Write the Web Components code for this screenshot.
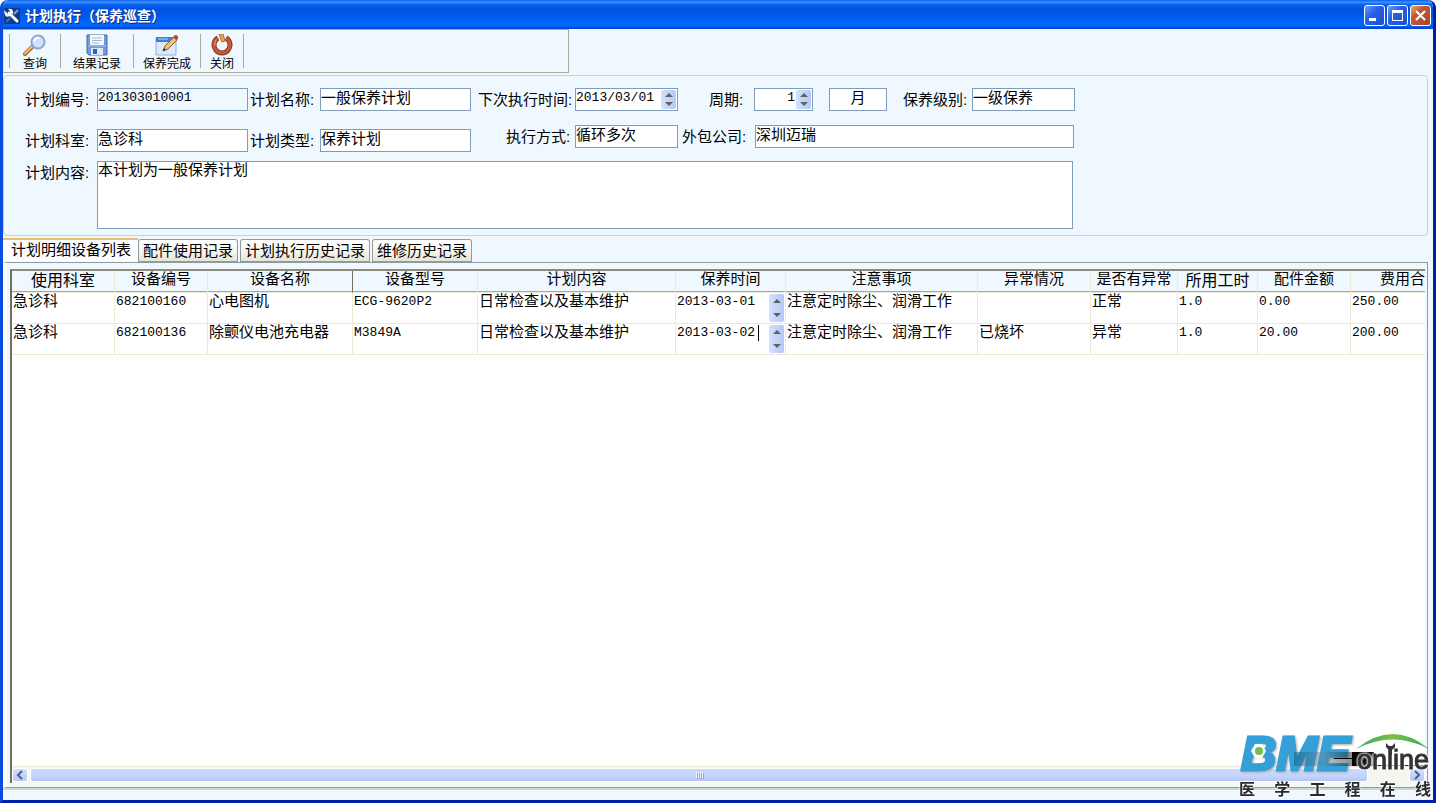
<!DOCTYPE html>
<html lang="zh-CN">
<head>
<meta charset="utf-8">
<title>计划执行（保养巡查）</title>
<style>
    html, body { height: 100%; margin: 0; }
    body {
        background: #fff;
        color: #000;
        overflow: hidden;
        font: 15px/17px "Liberation Sans", "Noto Sans CJK SC", sans-serif;
    }
</style>
</head>
<body>

<xp-window caption="计划执行（保养巡查）">
    <xp-toolbar slot="toolbar">
        <xp-tool icon="search" style="--w:51px">查询</xp-tool>
        <xp-tool icon="save" style="--w:73px">结果记录</xp-tool>
        <xp-tool icon="edit" style="--w:67px">保养完成</xp-tool>
        <xp-tool icon="power" style="--w:43px">关闭</xp-tool>
    </xp-toolbar>
    <plan-form></plan-form>
    <xp-tabs tabs="计划明细设备列表,配件使用记录,计划执行历史记录,维修历史记录">
        <device-grid></device-grid>
    </xp-tabs>
</xp-window>
<bme-logo></bme-logo>

<script>
const ICONS = {
    search: `<svg width="24" height="22" viewBox="0 0 24 22"><path d="M2 20l8-8" stroke="#a8642c" stroke-width="4" stroke-linecap="round"/><path d="M2 19.500l7-7" stroke="#f2c27c" stroke-width="2" stroke-linecap="round"/><circle cx="15" cy="8" r="6.500" fill="#cfe2fc" stroke="#8ea4d8" stroke-width="2"/><path d="M11 8a4 4 0 0 1 5-4" stroke="#fff" stroke-width="2" fill="none"/></svg>`,
    save: `<svg width="22" height="22" viewBox="0 0 22 22"><path d="M1 1h20v20H3l-2-2z" fill="#6d9bdd" stroke="#46689f"/><path d="M4 1h14v10H4z" fill="#f4f7fd"/><path d="M6 4h10M6 6.500h10M6 9h7" stroke="#a9b8d2"/><path d="M5 14h12v7H5z" fill="#dce6f6"/><path d="M7 15h4v5H7z" fill="#2a65bd"/><path d="M2 12h18" stroke="#a9c7f2"/></svg>`,
    edit: `<svg width="24" height="22" viewBox="0 0 24 22"><path d="M1 4h20v17H1z" fill="#dbe8fc" stroke="#8caee4"/><path d="M1 3h20v5H1z" fill="#3f7ddd"/><path d="M3 5h10" stroke="#b9d3ff"/><path d="M8 17l2-5L19 3l3 3-9 9z" fill="#eac27e" stroke="#8a6034"/><path d="M18 3l2-2q4 0 3 4l-2 1z" fill="#bd4728"/><path d="M8 17l1-3 2 2z" fill="#302820"/></svg>`,
    power: `<svg width="22" height="22" viewBox="0 0 22 22"><path d="M7 4a8 8 0 1 0 8 0" fill="none" stroke="#8d3420" stroke-width="5"/><path d="M7 4a8 8 0 1 0 8 0" fill="none" stroke="#c35a3b" stroke-width="3"/><path d="M5 6a7 7 0 0 0-1 5" fill="none" stroke="#eda17d" stroke-width="1"/><path d="M8 0h4l2 7-3 1z" fill="#e3ad58" stroke="#a8682e"/></svg>`,
    up: `<svg width="8" height="4" viewBox="0 0 8 4"><path d="M0 4l4-4 4 4z" fill="#62625e"/></svg>`,
    down: `<svg width="8" height="4" viewBox="0 0 8 4"><path d="M0 0l4 4 4-4z" fill="#62625e"/></svg>`
};

// Attach an open root and fill it with the given styles and markup
function render(el, css, html) {
    const root = el.shadowRoot || el.attachShadow({mode: 'open'});
    root.innerHTML = '<style>* { box-sizing: border-box; }' + css + '</style>' + html;
    return root;
}

class XpWindow extends HTMLElement {
    connectedCallback() {
        render(this, `
            :host {
                display: flex; flex-direction: column; height: 100vh; overflow: hidden;
                box-sizing: border-box; border-radius: 8px 8px 0 0; background: #f0f8ff;
                border: solid #0a4be0; border-width: 0 3px 3px; border-bottom-color: #0020a8; border-right-color: #001ea0;
            }
            header {
                flex: none; height: 29px; margin: 0 -3px; padding: 2px 5px 0 4px;
                display: flex; align-items: center; gap: 2px;
                background: linear-gradient(#0a5be8 0, #3d95ff 7%, #0a62f0 16%, #0053e0 30%, #0058ea 55%, #0067ff 80%, #0062f8 90%, #003fc4 100%);
            }
            h1 { margin: 0 auto 0 3px; font-size: 14px; line-height: 20px; color: #fff; text-shadow: 1px 1px #0a2a80; }
            button { width: 21px; height: 21px; padding: 0; border: 1px solid #fff; border-radius: 3px; background: linear-gradient(135deg, #6f9bf4, #2860e4 40%, #1c50d0); }
            button.close { background: linear-gradient(135deg, #e8b070, #c05a38 35%, #a84428); }
            button svg { display: block; }
            main { flex: 1; min-height: 0; padding-right: 5px; display: flex; flex-direction: column; }
        `, `
            <header>
                <svg width="16" height="16" viewBox="0 0 16 16"><path d="M0 0h16v16H0z" fill="#123a86"/><path d="M5 5l8 8" stroke="#fff" stroke-width="3" stroke-linecap="round"/><path d="M1 3l3 3 2-3-2-2q4-1 5 2t-3 5-5-1-1-5z" fill="#f2f3f6"/><path d="M10 6l4-4" stroke="#7ea2e0" stroke-width="2"/><path d="M2 14l4-4" stroke="#3f6cc0" stroke-width="2"/></svg>
                <h1>${this.getAttribute('caption')}</h1>
                <button aria-label="最小化"><svg width="19" height="19"><path d="M4 12h7v3H4z" fill="#fff"/></svg></button>
                <button aria-label="最大化"><svg width="19" height="19"><path d="M4 4h11v11H4zM5 7v7h9V7z" fill="#fff" fill-rule="evenodd"/></svg></button>
                <button class="close" aria-label="关闭窗口"><svg width="19" height="19"><path d="M5 5l9 9M14 5l-9 9" stroke="#fff" stroke-width="2"/></svg></button>
            </header>
            <slot name="toolbar"></slot>
            <main><slot></slot></main>
        `);
    }
}

class XpToolbar extends HTMLElement {
    connectedCallback() {
        render(this, `
            :host { display: flex; flex: none; align-self: flex-start; width: 566px; height: 44px; margin-bottom: 2px; padding: 4px 0 4px 5px; box-sizing: border-box; border: 1px solid #aca899; border-left-color: #e4e4dc; }
            :host::before { content: ""; width: 1px; background: #aca899; }
        `, '<slot></slot>');
    }
}

class XpTool extends HTMLElement {
    connectedCallback() {
        render(this, `
            :host { display: block; width: var(--w); border-right: 1px solid #aca899; box-sizing: border-box; }
            button { width: 100%; height: 100%; padding: 0; border: 0; background: none; font: 12px/13px "Noto Sans CJK SC", sans-serif; color: #000; display: flex; flex-direction: column; align-items: center; white-space: nowrap; }
            svg { flex: none; }
        `, `<button>${ICONS[this.getAttribute('icon')]}<span><slot></slot></span></button>`);
    }
}

class XpSpinner extends HTMLElement {
    connectedCallback() {
        render(this, `
            :host { display: flex; flex-direction: column; flex: none; width: 15px; border-radius: 2px; background: linear-gradient(90deg, #d4e0fd, #b4c8f8); overflow: hidden; }
            button { flex: 1; padding: 0; border: 0; background: none; display: flex; align-items: center; justify-content: center; }
        `, `<button aria-label="增加">${ICONS.up}</button><button aria-label="减少">${ICONS.down}</button>`);
    }
}

class XpField extends HTMLElement {
    connectedCallback() {
        const label = this.getAttribute('label');
        const value = this.getAttribute('value');
        const readonly = this.hasAttribute('readonly') ? 'readonly' : '';
        const area = this.hasAttribute('multiline');
        const mono = /^[\x20-\x7e]+$/.test(value) ? 'mono' : '';
        render(this, `
            :host { display: flex; flex: none; }
            label { flex: none; width: var(--label, 0); line-height: 23px; white-space: nowrap; }
            .box { display: flex; width: var(--box); height: 23px; background: #fff; border: 1px solid #7f9db9; }
            .box.readonly { background: #f0f8ff; }
            .box.area { height: 68px; }
            input, textarea {
                flex: 1; min-width: 0; margin: 0; padding: 0 0 4px; border: 0; outline: 0; resize: none;
                background: none; color: #000; font: inherit; text-align: var(--align, left);
            }
            textarea { line-height: 15px; }
            input.mono { padding-top: 1px; font: 13px/16px "Liberation Mono", monospace; }
            xp-spinner { margin: 1px; }
        `, `
            ${label ? `<label for="f">${label}</label>` : ''}
            <div class="box ${readonly} ${area ? 'area' : ''}">
                ${area ? `<textarea id="f">${value}</textarea>` : `<input id="f" class="${mono}" value="${value}" ${readonly} ${label ? '' : 'aria-label="周期单位"'}>`}
                ${this.hasAttribute('spinner') ? '<xp-spinner></xp-spinner>' : ''}
            </div>
        `);
    }
}

class PlanForm extends HTMLElement {
    connectedCallback() {
        render(this, `
            :host { display: flex; flex-direction: column; flex: none; gap: 9px; padding: 12px 0 6px 21px; border: 1px solid #d0d0bf; border-radius: 4px; }
            .top { display: flex; gap: 7px; }
            .ids { display: grid; grid-template-columns: auto auto; gap: 18px 2px; }
            .ids xp-field { --label: 72px; --box: 151px; }
            .ids xp-field:nth-child(even) { --label: 70px; }
            .run { display: flex; flex-direction: column; gap: 14px; }
            .line { display: flex; }
            .line xp-field { --label: 69px; --box: 103px; }
            .when { gap: 16px; }
            .who { gap: 4px; padding-left: 28px; }
        `, `
            <div class="top">
                <div class="ids">
                    <xp-field label="计划编号:" value="201303010001" readonly></xp-field>
                    <xp-field label="计划名称:" value="一般保养计划"></xp-field>
                    <xp-field label="计划科室:" value="急诊科"></xp-field>
                    <xp-field label="计划类型:" value="保养计划"></xp-field>
                </div>
                <div class="run">
                    <div class="line when">
                        <xp-field label="下次执行时间:" value="2013/03/01" spinner style="--label:97px"></xp-field>
                        <xp-field label="周期:" value="1" spinner style="--label:45px;--box:59px;--align:right;padding-left:15px"></xp-field>
                        <xp-field value="月" style="--box:58px;--align:center"></xp-field>
                        <xp-field label="保养级别:" value="一级保养"></xp-field>
                    </div>
                    <div class="line who">
                        <xp-field label="执行方式:" value="循环多次"></xp-field>
                        <xp-field label="外包公司:" value="深圳迈瑞" style="--label:73px;--box:319px"></xp-field>
                    </div>
                </div>
            </div>
            <xp-field label="计划内容:" value="本计划为一般保养计划" multiline style="--label:72px;--box:976px"></xp-field>
        `);
    }
}

class XpTabs extends HTMLElement {
    connectedCallback() {
        const tabs = this.getAttribute('tabs').split(',').map((t, i) =>
            `<button role="tab" aria-selected="${i === 0}">${t}</button>`).join('');
        render(this, `
            :host { display: flex; flex-direction: column; flex: 1; min-height: 0; padding: 2px 0 12px; box-sizing: border-box; }
            nav { display: flex; flex: none; align-items: flex-end; gap: 2px; height: 24px; }
            button {
                height: 23px; padding: 0 4px; font: inherit; color: #000; white-space: nowrap;
                border: 1px solid #919b9c; border-top-color: #7f9db9; border-radius: 3px 3px 0 0;
                background: linear-gradient(#fff, #f4f3ec 60%, #e6e4d8);
            }
            button[aria-selected=true] {
                height: 24px; margin-right: -2px; padding: 0 7px 4px 8px; background: #fcfcfe;
                border: 0; border-top: 2px solid #e5bf70; border-radius: 0;
            }
            section {
                flex: 1; min-height: 0; display: flex; padding: 6px 2px 4px 3px;
                border: 1px solid #919b9c; border-left: 4px solid #fbfcfe;
                box-shadow: 0 2px #d9d5c3;
            }
        `, `<nav role="tablist">${tabs}</nav><section role="tabpanel"><slot></slot></section>`);
    }
}

class DeviceGrid extends HTMLElement {
    get columns() {
        return [
            ['使用科室', 103, 'big'], ['设备编号', 93], ['设备名称', 145, 'mark'], ['设备型号', 125],
            ['计划内容', 198], ['保养时间', 110], ['注意事项', 192], ['异常情况', 113],
            ['是否有异常', 87], ['所用工时', 80, 'big'], ['配件金额', 93], ['费用合计', 119]
        ];
    }
    get rows() {
        return [
            ['急诊科', '682100160', '心电图机', 'ECG-9620P2', '日常检查以及基本维护', '2013-03-01', '注意定时除尘、润滑工作', '', '正常', '1.0', '0.00', '250.00'],
            ['急诊科', '682100136', '除颤仪电池充电器', 'M3849A', '日常检查以及基本维护', '2013-03-02', '注意定时除尘、润滑工作', '已烧坏', '异常', '1.0', '20.00', '200.00']
        ];
    }

    cell(text, col, row) {
        if (col === 5) {
            return `<td><div class="date"><input class="mono" aria-label="保养时间" value="${text}">${row === 1 ? '<i></i>' : ''}<xp-spinner></xp-spinner></div></td>`;
        }
        const mono = /^[\x20-\x7e]+$/.test(text) ? ' class="mono"' : '';
        return `<td${mono}>${text}</td>`;
    }

    connectedCallback() {
        const cols = this.columns.map(c => `<col style="width:${c[1]}px">`).join('');
        const head = this.columns.map(c => `<th class="${c[2] || ''}">${c[0]}</th>`).join('');
        const body = this.rows.map((r, n) => '<tr>' + r.map((t, i) => this.cell(t, i, n)).join('') + '</tr>').join('');
        render(this, `
            :host { display: flex; flex-direction: column; flex: 1; min-width: 0; background: #fff; border: solid #716f64; border-width: 2px 0 0 2px; border-top-color: #8d897c; box-sizing: border-box; }
            .view { flex: 1; min-height: 0; overflow-x: clip; overflow-y: visible; }
            table { width: 1458px; table-layout: fixed; border-collapse: separate; border-spacing: 0; }
            th { height: 22px; padding: 0 0 6px; font-weight: normal; line-height: 15px; white-space: nowrap; background: #f0f8ff; border-right: 1px solid #ece9d8; border-bottom: 1px solid #ece9d8; box-shadow: inset 0 -1px #aca899; }
            th.big { font-size: 16px; padding: 2px 0 4px; }
            th.mark { border-right-color: #716f64; }
            td { height: 31px; padding: 0 0 0 1px; vertical-align: top; line-height: 15px; white-space: nowrap; border-right: 1px solid #ece9d8; border-bottom: 1px solid #ece9d8; }
            td.mono, input { font: 13px/17px "Liberation Mono", monospace; }
            .date { display: flex; height: 30px; align-items: flex-start; }
            input { width: 81px; height: 17px; margin: 0; padding: 0; border: 0; outline: 0; background: none; color: #000; }
            i { width: 1px; height: 16px; margin-top: 1px; background: #000; }
            xp-spinner { height: 28px; margin: 1px 1px 0 auto; }
        `, `
            <div class="view"><table><colgroup>${cols}</colgroup><thead><tr>${head}</tr></thead><tbody>${body}</tbody></table></div>
            <xp-scrollbar></xp-scrollbar>
        `);
    }
}

class XpScrollbar extends HTMLElement {
    connectedCallback() {
        render(this, `
            :host { display: flex; flex: none; height: 17px; gap: 2px; padding: 1px 0; background: #f6f5ee; border-top: 1px solid #ece9d8; box-sizing: border-box; }
            button { width: 16px; padding: 0; border: 1px solid #fff; border-radius: 3px; background: linear-gradient(#d0defe, #b6caf8); }
            svg { display: block; margin: auto; }
            .track { flex: 1; padding-right: 39px; display: flex; }
            .thumb { flex: 1; display: flex; justify-content: center; align-items: center; gap: 1px; border: 1px solid #fff; border-radius: 3px; background: linear-gradient(#c9d8fd, #c4d4fc 60%, #b0c6f6); }
            .thumb b { width: 1px; height: 6px; background: #eef4ff; box-shadow: 1px 1px #8ca8e0; }
        `, `
            <button aria-label="向左"><svg width="8" height="10"><path d="M6 1L2 5l4 4" fill="none" stroke="#4d6185" stroke-width="2"/></svg></button>
            <div class="track"><div class="thumb"><b></b><b></b><b></b><b></b></div></div>
            <button aria-label="向右"><svg width="8" height="10"><path d="M2 1l4 4-4 4" fill="none" stroke="#4d6185" stroke-width="2"/></svg></button>
        `);
    }
}

// Watermark, floats over the window's corner
class BmeLogo extends HTMLElement {
    connectedCallback() {
        render(this, `
            :host { position: fixed; right: 5px; bottom: 5px; width: 192px; pointer-events: none; }
            svg { display: block; overflow: visible; }
            p { display: flex; justify-content: space-between; margin: 0; font-size: 16px; line-height: 17px; font-weight: bold; color: #2a2a2a; text-shadow: 0 0 2px #fff, 0 0 2px #fff; }
        `, `
            <svg width="192" height="48" viewBox="0 0 192 48">
                <defs>
                    <linearGradient id="d"><stop offset="0" stop-color="#00507c"/><stop offset=".5" stop-color="#6c8c9c"/><stop offset="1" stop-color="#001018"/></linearGradient>
                    <linearGradient id="g"><stop offset="0" stop-color="#2fa866"/><stop offset=".5" stop-color="#7cc142"/><stop offset="1" stop-color="#35a55c"/></linearGradient>
                </defs>
                <path d="M113 19h22v14h-22z" fill="#000"/>
                <g font-family="Liberation Sans, sans-serif">
                    <text x="2" y="37" font-size="49" font-weight="bold" font-style="italic" fill="#35a0d8" stroke="#35a0d8" stroke-width="3" style="filter:drop-shadow(1px 1px 1px #aaa)">BME</text>
                    <path d="M55 19h58v14H55z" fill="url(#d)" opacity=".45"/>
                    <path d="M95 25.500h22" stroke="#000"/>
                    <path d="M12 18l4-7h7l4 7-4 7h-7z" fill="#fff"/>
                    <circle cx="20" cy="18" r="4" fill="#6fc04a"/>
                    <path d="M135 32.500h53" stroke="#000"/>
                    <text x="118" y="36" font-size="27" fill="#333" stroke="#333" style="filter:drop-shadow(0 0 1px #fff) drop-shadow(0 0 1px #fff)">online</text>
                </g>
                <path d="M117 16Q154-14 190 16Q154-3 117 16z" fill="url(#g)"/>
                <path d="M147 10v4l3 3v5h3v-5l3-3v-4l-3 3h-3z" fill="#333"/>
            </svg>
            <p><span>医</span><span>学</span><span>工</span><span>程</span><span>在</span><span>线</span></p>
        `);
    }
}

customElements.define('xp-spinner', XpSpinner);
customElements.define('xp-scrollbar', XpScrollbar);
customElements.define('xp-field', XpField);
customElements.define('xp-tool', XpTool);
customElements.define('xp-toolbar', XpToolbar);
customElements.define('plan-form', PlanForm);
customElements.define('device-grid', DeviceGrid);
customElements.define('xp-tabs', XpTabs);
customElements.define('bme-logo', BmeLogo);
customElements.define('xp-window', XpWindow);
</script>
</body>
</html>
